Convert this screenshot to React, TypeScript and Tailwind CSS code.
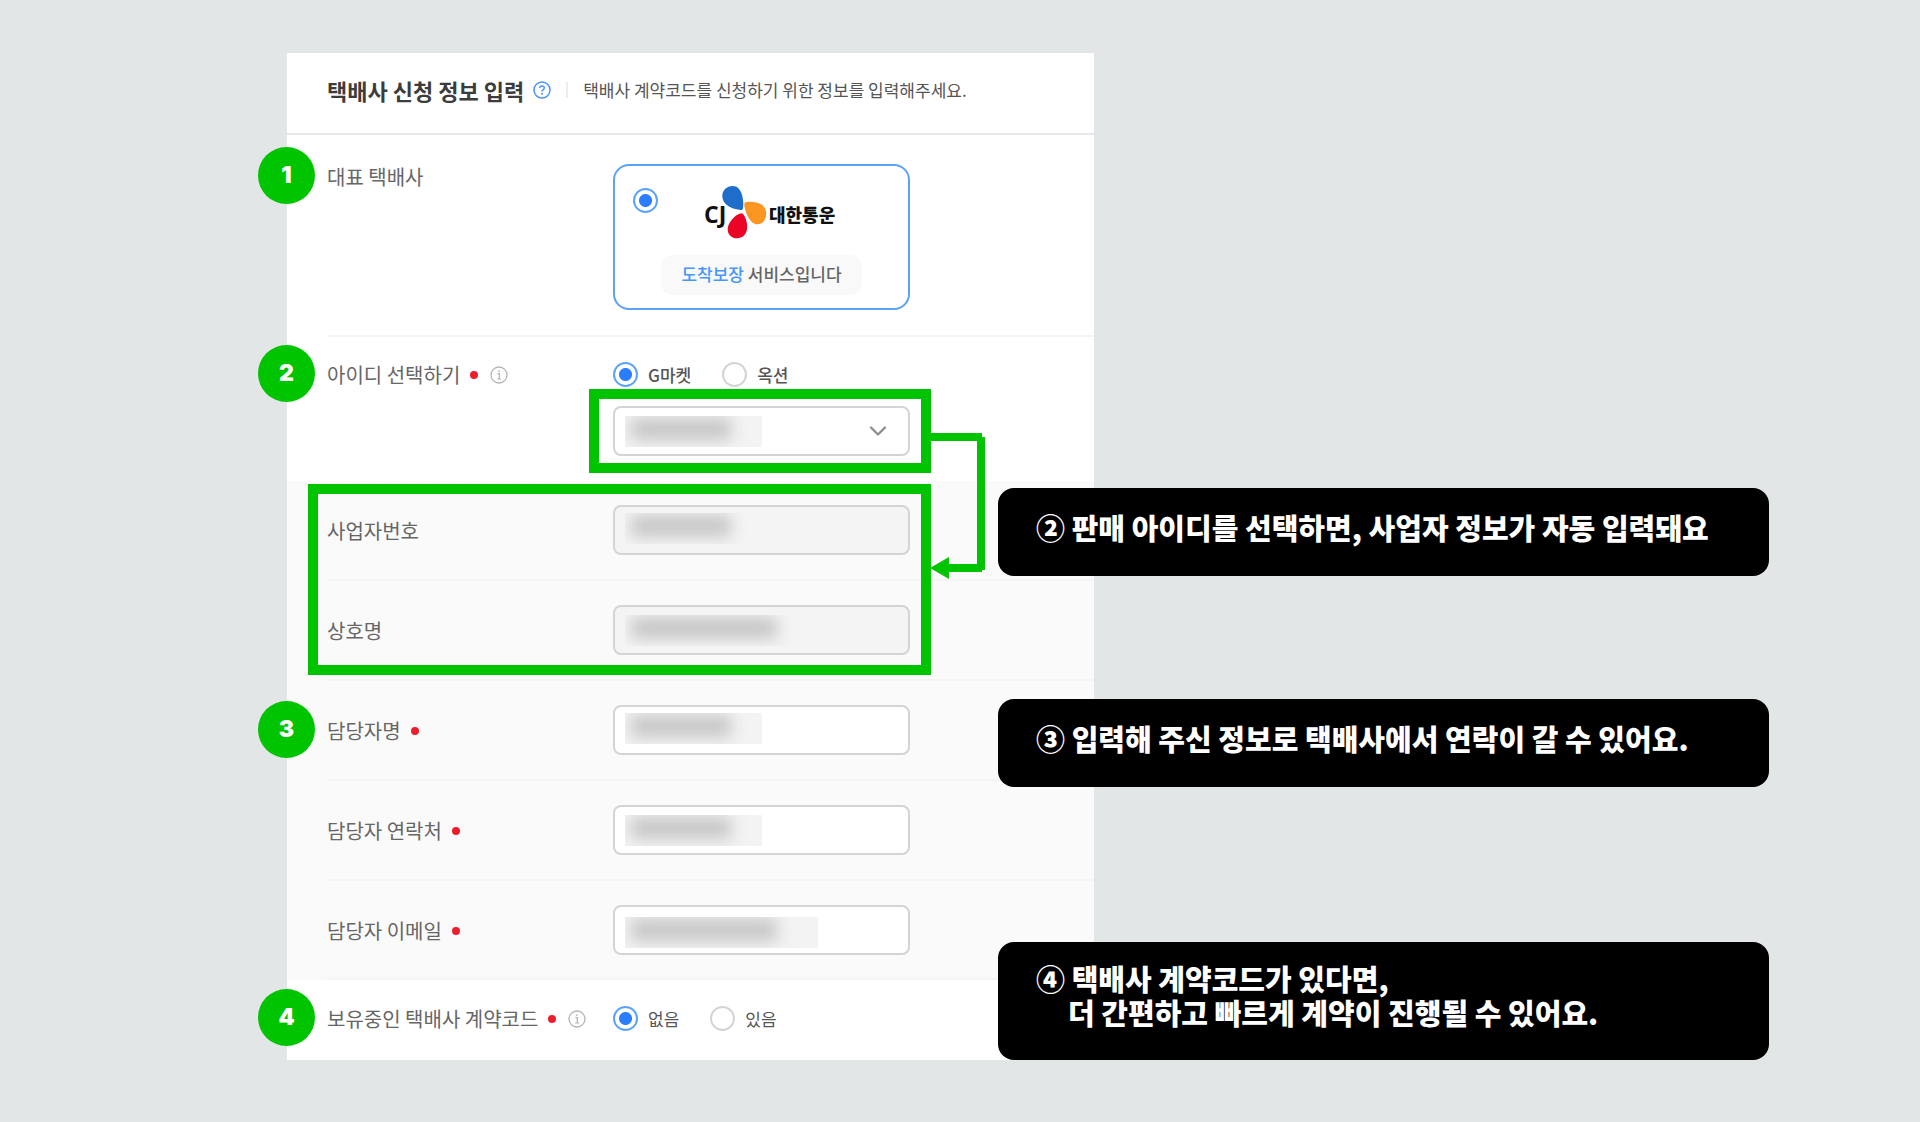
import React from 'react';
import { ChevronDown } from 'lucide-react';

interface FieldRowProps {
  label: string;
  htmlFor?: string;
  required?: boolean;
  info?: boolean;
  badge?: number;
  className?: string;
  children: React.ReactNode;
}

interface MaskedInputProps {
  id: string;
  maskClassName: string;
  blobClassName: string;
  disabled?: boolean;
}

const StepBadge: React.FC<{ step: number }> = ({ step }) => (
  <span className="absolute -left-[69px] bottom-[-15px] flex h-[57px] w-[57px] items-center justify-center rounded-full bg-[#00c400] font-['Inter',sans-serif] text-[23px] font-black text-white">
    {step}
  </span>
);

const InfoIcon: React.FC = () => (
  <svg className="ml-3 h-[18px] w-[18px] shrink-0" viewBox="0 0 18 18" fill="none" stroke="#b4b4b4">
    <circle cx="9" cy="9" r="8" strokeWidth="1.3" />
    <path d="M7.4 7.6H9.3V13M7.2 13H11.2" strokeWidth="1.2" />
    <circle cx="9" cy="5.1" r="0.9" fill="#b4b4b4" stroke="none" />
  </svg>
);

const HelpIcon: React.FC = () => (
  <svg className="h-[18px] w-[18px]" viewBox="0 0 18 18" fill="none" stroke="#4796fd">
    <circle cx="9" cy="9" r="8" strokeWidth="1.5" />
    <path d="M6.7 7.1C6.7 5.7 7.7 4.9 9 4.9S11.3 5.7 11.3 7C11.3 8.6 9 8.6 9 10.6" strokeWidth="1.5" />
    <circle cx="9" cy="12.7" r="1" fill="#4796fd" stroke="none" />
  </svg>
);

const CarrierLogo: React.FC = () => (
  <svg className="h-[53px] w-[134px]" viewBox="0 0 134 53" role="img" aria-label="CJ 대한통운">
    <text x="0" y="37" fontSize="23" fontWeight="700" fill="#111" fontFamily="Open Sans, sans-serif">CJ</text>
    <path d="M28.5 0C34.5 0 37.2 5 38.3 10C39.3 14.5 39.7 19 39 22.2C38.6 24 37.4 24.2 35.5 23.8C31 23.2 26 21.8 22.5 18.8C19.5 16.2 18.3 13 18.3 9.8C18.3 4.3 23 0 28.5 0Z" fill="#1f6dcb" />
    <path d="M40.3 18.2C40.3 16.4 42 15.7 44.5 15.7C49 15.5 54.5 16.2 58 18.8C61 21 62.2 24.5 62.2 28C62.2 33.8 58.5 38.3 53.5 38.3C48.5 38.3 45 33.5 42.8 28.2C41.2 24.6 40.3 20.8 40.3 18.2Z" fill="#fa9622" />
    <path d="M37.5 27.2C39.3 27.2 40.7 30 41.8 33C43 36.3 43.4 39.5 43 43C42.4 48.5 38.5 52.3 33 52.3C27.5 52.3 23.7 48.5 23.7 43.2C23.7 39.5 25.7 36 28.7 32.8C31.6 29.6 35 27.2 37.5 27.2Z" fill="#ec0427" />
    <text x="65" y="36" fontSize="18" fontWeight="900" fill="#111" fontFamily="Noto Sans CJK KR, sans-serif">대한통운</text>
  </svg>
);

const RadioInput: React.FC<React.InputHTMLAttributes<HTMLInputElement>> = (props) => (
  <input
    type="radio"
    className="h-[25px] w-[25px] shrink-0 appearance-none rounded-full border-2 border-[#d3d3d3] bg-white checked:border-[#5ba2fd] checked:bg-[radial-gradient(circle,#2a7efd_6px,#fff_7px)]"
    {...props}
  />
);

const RadioOption: React.FC<{ name: string; label: string; defaultChecked?: boolean }> = ({ name, label, defaultChecked }) => (
  <label className="flex items-center gap-2.5 text-[17px] leading-[25px] text-[#555]">
    <RadioInput name={name} defaultChecked={defaultChecked} />
    {label}
  </label>
);

const FieldRow: React.FC<FieldRowProps> = ({ label, htmlFor, required, info, badge, className = '', children }) => {
  const LabelTag = htmlFor ? 'label' : 'span';
  return (
    <div className={`ml-10 flex border-[#f4f4f4] ${className}`}>
      <div className="relative flex h-[25px] w-[286px] shrink-0 items-center">
        {badge && <StepBadge step={badge} />}
        <LabelTag htmlFor={htmlFor} className="whitespace-nowrap text-xl leading-[25px] text-[#666]">
          {label}
        </LabelTag>
        {required && <span className="ml-2.5 h-2 w-2 shrink-0 rounded-full bg-[#ee1d2c]" />}
        {info && <InfoIcon />}
      </div>
      {children}
    </div>
  );
};

const Mask: React.FC<{ maskClassName: string; blobClassName: string }> = ({ maskClassName, blobClassName }) => (
  <span className={`pointer-events-none absolute left-3 h-[31px] overflow-hidden ${maskClassName}`}>
    <span className={`absolute left-1.5 top-0.5 h-[22px] bg-[#c6c6c6] blur-[8px] ${blobClassName}`} />
  </span>
);

const MaskedInput: React.FC<MaskedInputProps> = ({ id, maskClassName, blobClassName, disabled }) => (
  <div className="relative -mt-[13px] w-[297px]">
    <input
      id={id}
      type="text"
      disabled={disabled}
      className="block h-[50px] w-full rounded-lg border-2 border-[#d4d4d4] bg-white px-3 disabled:bg-[#f4f4f4]"
    />
    <Mask maskClassName={maskClassName} blobClassName={blobClassName} />
  </div>
);

const Callout: React.FC<{ className?: string; children: React.ReactNode }> = ({ className = '', children }) => (
  <p className={`rounded-2xl bg-black px-[38px] text-[29px] font-black leading-[34px] text-white ${className}`}>
    {children}
  </p>
);

const App: React.FC = () => {
  return (
    <main className="min-h-screen bg-[#e2e6e7] pb-[62px] pl-[287px] pr-[151px] pt-[53px] font-['Noto_Sans_CJK_KR',sans-serif]">
      <div className="grid grid-cols-[minmax(0,807px)_minmax(0,1fr)]">
        <form className="bg-white">
          <header className="flex h-[82px] items-center border-b-2 border-[#e8e8e8] pb-1.5 pl-10">
            <h1 className="text-[22px] font-bold text-[#3c3c3c]">택배사 신청 정보 입력</h1>
            <span className="ml-[9px]">
              <HelpIcon />
            </span>
            <span className="ml-[15px] h-4 w-0.5 bg-[#ececec]" />
            <p className="ml-[15px] text-[17px] text-[#555]">택배사 계약코드를 신청하기 위한 정보를 입력해주세요.</p>
          </header>

          <FieldRow label="대표 택배사" badge={1} className="border-b-2 pb-[25px] pt-[29px]">
            <label className="block h-[146px] w-[297px] rounded-2xl border-2 border-[#5ba2fd] pt-5 text-[17px] text-[#666]">
              <span className="flex pl-[18px] pt-0.5">
                <RadioInput name="carrier" defaultChecked />
                <span className="-mt-0.5 ml-[46px]">
                  <CarrierLogo />
                </span>
              </span>
              <span className="mx-auto mt-4 flex h-10 w-fit items-center whitespace-pre rounded-xl bg-[#f9f9f9] px-5 pb-0.5 font-medium">
                <span className="text-[#4796fd]">도착보장</span> 서비스입니다
              </span>
            </label>
          </FieldRow>

          <FieldRow label="아이디 선택하기" htmlFor="seller-id" badge={2} required info className="py-[25px]">
            <div>
              <div className="flex gap-[31px] font-medium">
                <RadioOption name="market" label="G마켓" defaultChecked />
                <RadioOption name="market" label="옥션" />
              </div>
              <div className="relative mt-[19px] w-[297px]">
                <select id="seller-id" className="block h-[50px] w-full appearance-none rounded-lg border-2 border-[#d4d4d4] bg-white px-3" />
                <Mask maskClassName="top-2.5 w-[137px] bg-[#f3f3f3]" blobClassName="w-[100px]" />
                <ChevronDown className="pointer-events-none absolute right-[18px] top-[11px] h-7 w-7 text-[#8c8c8c]" />
                <span className="pointer-events-none absolute -inset-y-[17px] -left-6 -right-[21px] border-[10px] border-[#00c400]" />
                {/* arrow from the seller id to the auto-filled fields */}
                <svg
                  className="pointer-events-none absolute -right-[76px] top-[26px] h-[151px] w-[56px]"
                  viewBox="0 0 56 151"
                  fill="#00c400"
                >
                  <path d="M0 1H52V5H55V138H52V140H19V147L0 136L19 125V132H47V9H0Z" />
                </svg>
              </div>
            </div>
          </FieldRow>

          <div className="bg-[#fafafa]">
            <div className="relative">
              <FieldRow label="사업자번호" htmlFor="biz-number" className="border-b-2 pb-6 pt-[37px]">
                <MaskedInput id="biz-number" disabled maskClassName="top-2 w-[137px]" blobClassName="w-[100px]" />
              </FieldRow>
              <FieldRow label="상호명" htmlFor="biz-name" className="border-b-2 pb-6 pt-[37px]">
                <MaskedInput id="biz-name" disabled maskClassName="top-2.5 w-[193px]" blobClassName="w-[146px]" />
              </FieldRow>
              <span className="pointer-events-none absolute bottom-[6px] left-[21px] right-[163px] top-[3px] border-[10px] border-[#00c400]" />
            </div>
            <FieldRow label="담당자명" htmlFor="manager-name" badge={3} required className="border-b-2 pb-6 pt-[37px]">
              <MaskedInput id="manager-name" maskClassName="top-2 w-[137px] bg-[#f3f3f3]" blobClassName="w-[100px]" />
            </FieldRow>
            <FieldRow label="담당자 연락처" htmlFor="manager-phone" required className="border-b-2 pb-6 pt-[37px]">
              <MaskedInput id="manager-phone" maskClassName="top-2.5 w-[137px] bg-[#f3f3f3]" blobClassName="w-[100px]" />
            </FieldRow>
            <FieldRow label="담당자 이메일" htmlFor="manager-email" required className="border-b-2 pb-[23px] pt-[37px]">
              <MaskedInput id="manager-email" maskClassName="top-3 w-[193px] bg-[#f3f3f3]" blobClassName="w-[146px]" />
            </FieldRow>
          </div>

          <FieldRow label="보유중인 택배사 계약코드" badge={4} required info className="pb-7 pt-[26px]">
            <div className="flex gap-[31px]">
              <RadioOption name="contract" label="없음" defaultChecked />
              <RadioOption name="contract" label="있음" />
            </div>
          </FieldRow>
        </form>

        <aside className="relative -ml-24 pt-[435px]">
          <Callout className="h-[88px] pt-[22px]">② 판매 아이디를 선택하면, 사업자 정보가 자동 입력돼요</Callout>
          <Callout className="mt-[123px] h-[88px] pt-[22px]">③ 입력해 주신 정보로 택배사에서 연락이 갈 수 있어요.</Callout>
          <Callout className="mt-[155px] h-[118px] pt-[19px]">
            ④ 택배사 계약코드가 있다면,
            <span className="block pl-8">더 간편하고 빠르게 계약이 진행될 수 있어요.</span>
          </Callout>
        </aside>
      </div>
    </main>
  );
};

export default App;
